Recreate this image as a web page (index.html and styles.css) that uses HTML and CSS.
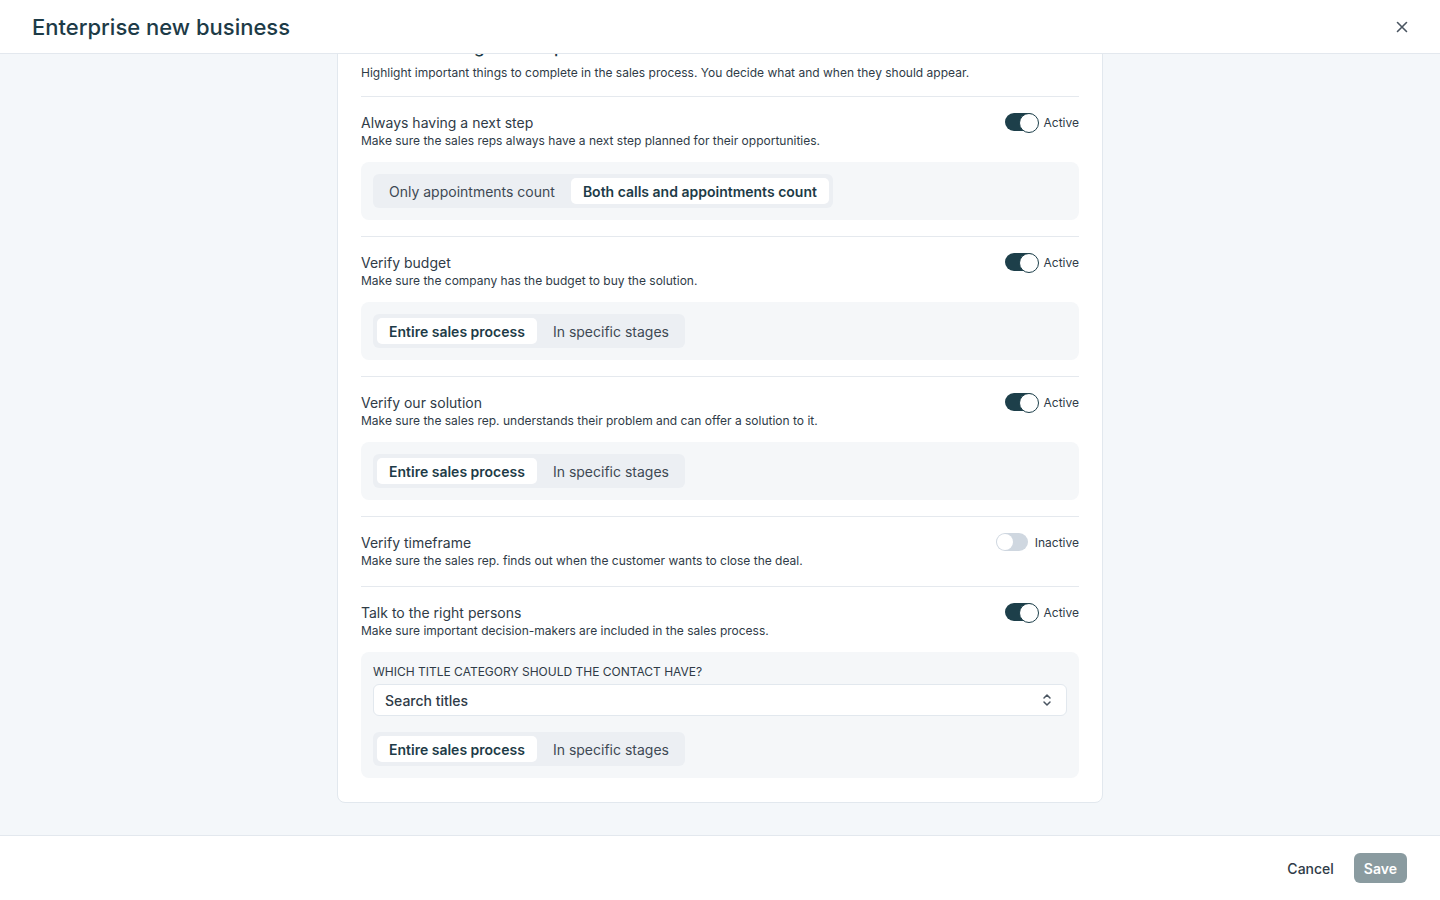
FILE: index.html
```html
<!DOCTYPE html>
<html lang="en">
<head>
  <meta charset="UTF-8">
  <meta name="viewport" content="width=device-width, initial-scale=1.0">
  <title>Enterprise new business</title>
  <link rel="stylesheet" href="styles.css">
</head>
<body>
  <div class="modal">
    <header class="modal-header">
      <h1 class="modal-title">Enterprise new business</h1>
      <button class="close-btn" aria-label="Close">
        <svg width="12" height="12" viewBox="0 0 12 12"><path d="M1.5 1.5l9 9M10.5 1.5l-9 9" stroke="currentColor" stroke-width="1.6" stroke-linecap="round"/></svg>
      </button>
    </header>

    <main class="modal-body" id="modalBody">
      <section class="card">
        <div class="card-intro">
          <h2 class="card-title">Sales coaching &amp; checkpoints</h2>
          <p class="card-desc">Highlight important things to complete in the sales process. You decide what and when they should appear.</p>
        </div>

        <div class="rule">
          <div class="rule-head">
            <div>
              <div class="rule-title">Always having a next step</div>
              <div class="rule-desc">Make sure the sales reps always have a next step planned for their opportunities.</div>
            </div>
            <label class="toggle-wrap"><span class="toggle on"></span>Active</label>
          </div>
          <div class="rule-options">
            <div class="segmented">
              <button class="seg-item">Only appointments count</button>
              <button class="seg-item selected">Both calls and appointments count</button>
            </div>
          </div>
        </div>

        <div class="rule">
          <div class="rule-head">
            <div>
              <div class="rule-title">Verify budget</div>
              <div class="rule-desc">Make sure the company has the budget to buy the solution.</div>
            </div>
            <label class="toggle-wrap"><span class="toggle on"></span>Active</label>
          </div>
          <div class="rule-options">
            <div class="segmented">
              <button class="seg-item selected">Entire sales process</button>
              <button class="seg-item">In specific stages</button>
            </div>
          </div>
        </div>

        <div class="rule">
          <div class="rule-head">
            <div>
              <div class="rule-title">Verify our solution</div>
              <div class="rule-desc">Make sure the sales rep. understands their problem and can offer a solution to it.</div>
            </div>
            <label class="toggle-wrap"><span class="toggle on"></span>Active</label>
          </div>
          <div class="rule-options">
            <div class="segmented">
              <button class="seg-item selected">Entire sales process</button>
              <button class="seg-item">In specific stages</button>
            </div>
          </div>
        </div>

        <div class="rule">
          <div class="rule-head">
            <div>
              <div class="rule-title">Verify timeframe</div>
              <div class="rule-desc">Make sure the sales rep. finds out when the customer wants to close the deal.</div>
            </div>
            <label class="toggle-wrap"><span class="toggle"></span>Inactive</label>
          </div>
        </div>

        <div class="rule">
          <div class="rule-head">
            <div>
              <div class="rule-title">Talk to the right persons</div>
              <div class="rule-desc">Make sure important decision-makers are included in the sales process.</div>
            </div>
            <label class="toggle-wrap"><span class="toggle on"></span>Active</label>
          </div>
          <div class="rule-options">
            <div class="field-label">Which title category should the contact have?</div>
            <div class="select">
              <span>Search titles</span>
              <svg width="12" height="14" viewBox="0 0 12 14"><path d="M3 5l3-3 3 3M3 9l3 3 3-3" fill="none" stroke="#4a5561" stroke-width="1.5" stroke-linecap="round" stroke-linejoin="round"/></svg>
            </div>
            <div class="segmented spaced">
              <button class="seg-item selected">Entire sales process</button>
              <button class="seg-item">In specific stages</button>
            </div>
          </div>
        </div>
      </section>
    </main>

    <footer class="modal-footer">
      <button class="btn-link">Cancel</button>
      <button class="btn-primary" disabled>Save</button>
    </footer>
  </div>

  <script>
    // open the settings scrolled down to the last rule
    const body = document.getElementById('modalBody');
    body.scrollTop = body.scrollHeight;
  </script>
</body>
</html>
```

FILE: styles.css
```css
* {
  box-sizing: border-box;
}

body {
  margin: 0;
  font-family: Inter, "Noto Sans", sans-serif;
  color: #2f3b47;
  background-color: #fff;
}

button {
  font-family: inherit;
}

.modal {
  display: flex;
  flex-direction: column;
  height: 100vh;
}

.modal-header {
  display: flex;
  align-items: center;
  justify-content: space-between;
  height: 54px;
  padding: 0 32px;
  border-bottom: 1px solid #e3e8ee;
  flex-shrink: 0;
}

.modal-title {
  margin: 0;
  font-size: 22px;
  font-weight: 500;
  color: #1d3b47;
}

.close-btn {
  display: flex;
  background: none;
  border: none;
  padding: 0;
  color: #4a5561;
  cursor: pointer;
}

.modal-body {
  flex: 1;
  overflow-y: auto;
  scrollbar-width: none; /* no bar, the list is still scrollable */
  background-color: #f4f7fa;
  padding: 32px 0;
}

.card {
  width: 766px;
  margin: 0 auto;
  background-color: #fff;
  border: 1px solid #e2e8ee;
  border-radius: 8px;
  padding: 24px 23px 8px;
}

.card-intro {
  padding-bottom: 14px;
}

.card-title {
  margin: 0 0 6px;
  font-size: 17px;
  line-height: 22px;
  font-weight: 500;
  color: #1d3b47;
}

.card-desc {
  margin: 0;
  font-size: 12px;
  line-height: 18px;
  color: #2f3b47;
}

.rule {
  border-top: 1px solid #e5e9ee;
  padding: 16px 0;
}

.rule-head {
  display: flex;
  justify-content: space-between;
  align-items: flex-start;
}

.rule-title {
  font-size: 14px;
  line-height: 19px;
  color: #2f3b47;
}

.rule-desc {
  font-size: 12px;
  line-height: 18px;
  color: #2f3b47;
}

.toggle-wrap {
  display: flex;
  align-items: center;
  gap: 7px;
  font-size: 12px;
  color: #2f3b47;
}

.toggle {
  position: relative;
  width: 32px;
  height: 18px;
  border-radius: 9px;
  background-color: #cfd7e0;
}

.toggle::after {
  content: "";
  position: absolute;
  top: 1px;
  left: 1px;
  width: 16px;
  height: 16px;
  border-radius: 50%;
  background-color: #fff;
}

.toggle.on {
  background-color: #1d3f4a;
}

.toggle.on::after {
  top: 0;
  left: 14px;
  width: 18px;
  height: 18px;
  border: 1.5px solid #1d3f4a;
}

.rule-options {
  margin-top: 12px;
  background-color: #f5f7f9;
  border-radius: 8px;
  padding: 12px;
}

.segmented {
  display: inline-flex;
  gap: 4px;
  padding: 4px;
  background-color: #eceff3;
  border-radius: 6px;
}

.segmented.spaced {
  margin-top: 16px;
}

.seg-item {
  height: 26px;
  padding: 0 12px;
  border: none;
  border-radius: 5px;
  background: none;
  font-size: 14px;
  color: #3e4954;
  cursor: pointer;
}

.seg-item.selected {
  background-color: #fff;
  font-weight: 600;
  color: #1d3b47;
}

.field-label {
  font-size: 12px;
  line-height: 16px;
  text-transform: uppercase;
  color: #2f3b47;
  margin-bottom: 4px;
}

.select {
  display: flex;
  align-items: center;
  justify-content: space-between;
  height: 32px;
  padding: 0 13px 0 11px;
  background-color: #fff;
  border: 1px solid #e2e8ee;
  border-radius: 6px;
  font-size: 14px;
  font-weight: 500;
  color: #2f3b47;
}

.modal-footer {
  display: flex;
  justify-content: flex-end;
  align-items: center;
  gap: 20px;
  height: 65px;
  padding: 0 33px;
  border-top: 1px solid #e3e8ee;
  flex-shrink: 0;
}

.btn-link {
  padding: 0;
  background: none;
  border: none;
  font-size: 14px;
  font-weight: 500;
  color: #2f3b47;
  cursor: pointer;
}

.btn-primary {
  height: 30px;
  padding: 0 10px;
  border: none;
  border-radius: 6px;
  background-color: #8a9ba0;
  color: #fff;
  font-size: 14px;
  font-weight: 600;
}
```
